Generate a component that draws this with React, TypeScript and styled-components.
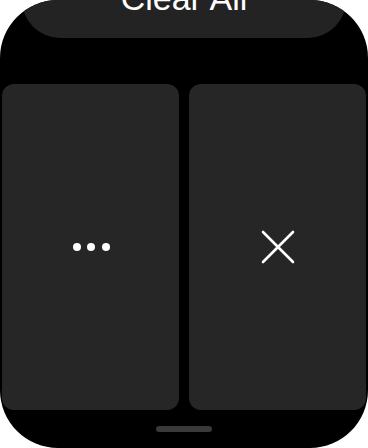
import React from 'react';
import styled, { createGlobalStyle } from 'styled-components';

const GlobalStyle = createGlobalStyle`
  html, body {
    margin: 0;
    padding: 0;
    background: #ffffff;
  }
  body {
    font-family: "Liberation Sans", Arial, sans-serif;
  }
`;

const Screen = styled.div`
  width: 368px;
  height: 448px;
  background: #000000;
  border-radius: 58px;
  overflow: hidden;
  display: flex;
  flex-direction: column;
  align-items: stretch;
`;

const ClearAllButton = styled.button`
  margin: -40px 22px 0;
  height: 78px;
  border: none;
  border-radius: 38px;
  background: #232323;
  color: #ffffff;
  font-family: "Liberation Sans", Arial, sans-serif;
  font-size: 34px;
  line-height: 1;
  display: flex;
  align-items: center;
  justify-content: center;
  padding: 0 0 3px;
`;

const Actions = styled.div`
  margin-top: 46px;
  padding: 0 2px;
  height: 326px;
  display: grid;
  grid-template-columns: 1fr 1fr;
  gap: 10px;
`;

const ActionCard = styled.div`
  background: #262626;
  border-radius: 12px;
  display: flex;
  align-items: center;
  justify-content: center;
`;

const Dots = styled.div`
  display: flex;
  gap: 6.5px;
  margin-left: 1px;
`;

const Dot = styled.span`
  width: 8px;
  height: 8px;
  border-radius: 50%;
  background: #ffffff;
`;

const HomeIndicator = styled.div`
  margin: 16px auto 0;
  width: 56px;
  height: 6px;
  border-radius: 3px;
  background: #3a3a3a;
`;

const CloseIcon = () => (
  <svg width="34" height="34" viewBox="0 0 34 34" fill="none">
    <path d="M2 2 L32 32 M32 2 L2 32" stroke="#ffffff" strokeWidth="2.6" strokeLinecap="round" />
  </svg>
);

export default function App() {
  return (
    <>
      <GlobalStyle />
      <Screen>
        <ClearAllButton>Clear All</ClearAllButton>
        <Actions>
          <ActionCard>
            <Dots>
              <Dot />
              <Dot />
              <Dot />
            </Dots>
          </ActionCard>
          <ActionCard>
            <CloseIcon />
          </ActionCard>
        </Actions>
        <HomeIndicator />
      </Screen>
    </>
  );
}
